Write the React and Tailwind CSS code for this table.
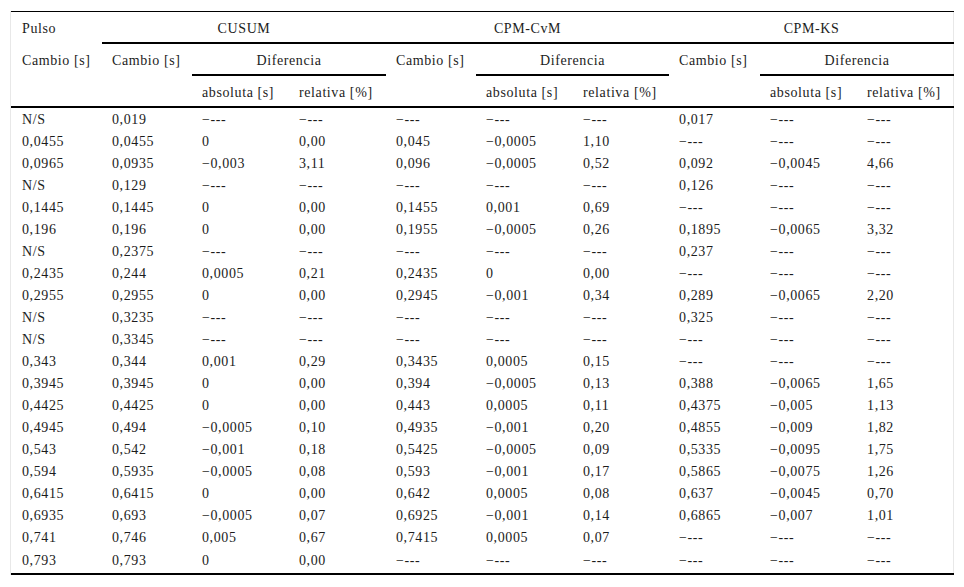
import React from "react";

const D = "−---";

const rows = [
  ["N/S", "0,019", D, D, D, D, D, "0,017", D, D],
  ["0,0455", "0,0455", "0", "0,00", "0,045", "−0,0005", "1,10", D, D, D],
  ["0,0965", "0,0935", "−0,003", "3,11", "0,096", "−0,0005", "0,52", "0,092", "−0,0045", "4,66"],
  ["N/S", "0,129", D, D, D, D, D, "0,126", D, D],
  ["0,1445", "0,1445", "0", "0,00", "0,1455", "0,001", "0,69", D, D, D],
  ["0,196", "0,196", "0", "0,00", "0,1955", "−0,0005", "0,26", "0,1895", "−0,0065", "3,32"],
  ["N/S", "0,2375", D, D, D, D, D, "0,237", D, D],
  ["0,2435", "0,244", "0,0005", "0,21", "0,2435", "0", "0,00", D, D, D],
  ["0,2955", "0,2955", "0", "0,00", "0,2945", "−0,001", "0,34", "0,289", "−0,0065", "2,20"],
  ["N/S", "0,3235", D, D, D, D, D, "0,325", D, D],
  ["N/S", "0,3345", D, D, D, D, D, D, D, D],
  ["0,343", "0,344", "0,001", "0,29", "0,3435", "0,0005", "0,15", D, D, D],
  ["0,3945", "0,3945", "0", "0,00", "0,394", "−0,0005", "0,13", "0,388", "−0,0065", "1,65"],
  ["0,4425", "0,4425", "0", "0,00", "0,443", "0,0005", "0,11", "0,4375", "−0,005", "1,13"],
  ["0,4945", "0,494", "−0,0005", "0,10", "0,4935", "−0,001", "0,20", "0,4855", "−0,009", "1,82"],
  ["0,543", "0,542", "−0,001", "0,18", "0,5425", "−0,0005", "0,09", "0,5335", "−0,0095", "1,75"],
  ["0,594", "0,5935", "−0,0005", "0,08", "0,593", "−0,001", "0,17", "0,5865", "−0,0075", "1,26"],
  ["0,6415", "0,6415", "0", "0,00", "0,642", "0,0005", "0,08", "0,637", "−0,0045", "0,70"],
  ["0,6935", "0,693", "−0,0005", "0,07", "0,6925", "−0,001", "0,14", "0,6865", "−0,007", "1,01"],
  ["0,741", "0,746", "0,005", "0,67", "0,7415", "0,0005", "0,07", D, D, D],
  ["0,793", "0,793", "0", "0,00", D, D, D, D, D, D],
];

const widths = [91, 90, 97, 97, 90, 97, 96, 91, 97, 97];
const groups = ["CUSUM", "CPM-CvM", "CPM-KS"];

export default function App() {
  return (
    <div className="min-h-screen bg-white pt-[11px]">
      <div className="ml-[10px] w-[944px] border-x border-[#e8e8e8] font-['Liberation_Serif',serif] text-[14px] leading-none tracking-[0.6px] text-[#1c1c1c]">
        <table className="w-full table-fixed border-collapse">
          <colgroup>
            {widths.map((w, i) => (
              <col key={i} style={{ width: w }} />
            ))}
          </colgroup>
          <thead>
            <tr className="h-[31px] border-t border-black">
              <th className="pt-[4px] pl-[11px] text-left font-normal">Pulso</th>
              {groups.map((g) => (
                <th key={g} colSpan={3} className="border-b-2 border-black pt-[4px] text-center font-normal">
                  {g}
                </th>
              ))}
            </tr>
            <tr className="h-[32px]">
              <th className="pt-[4px] pl-[11px] text-left font-normal">Cambio [s]</th>
              {groups.map((g) => (
                <React.Fragment key={g}>
                  <th className="pt-[4px] pl-[10px] text-left font-normal">Cambio [s]</th>
                  <th colSpan={2} className="border-b-2 border-black pt-[4px] text-center font-normal">
                    Diferencia
                  </th>
                </React.Fragment>
              ))}
            </tr>
            <tr className="h-[32px] border-b-2 border-black">
              <th />
              {groups.map((g) => (
                <React.Fragment key={g}>
                  <th />
                  <th className="pt-[4px] pl-[10px] text-left font-normal">absoluta [s]</th>
                  <th className="pt-[4px] pl-[10px] text-left font-normal">relativa [%]</th>
                </React.Fragment>
              ))}
            </tr>
          </thead>
          <tbody className="border-b-2 border-black">
            {rows.map((r, i) => (
              <tr key={i} className={i === rows.length - 1 ? "h-[27px] align-top" : "h-[22px]"}>
                {r.map((c, j) => (
                  <td
                    key={j}
                    className={`${j === 0 ? "pl-[11px]" : "pl-[10px]"} ${i === rows.length - 1 ? "pt-[7px]" : "pt-[4px]"} whitespace-nowrap`}
                  >
                    {c}
                  </td>
                ))}
              </tr>
            ))}
          </tbody>
        </table>
      </div>
    </div>
  );
}
